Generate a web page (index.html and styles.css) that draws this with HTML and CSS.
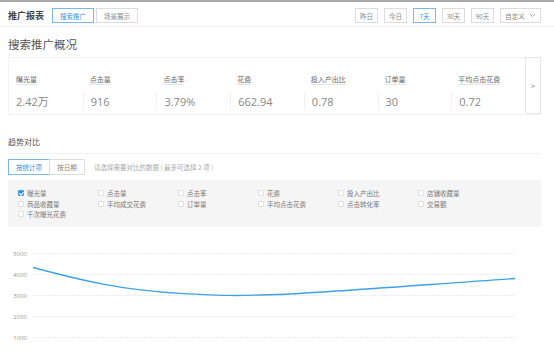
FILE: index.html
```html
<!DOCTYPE html>
<html lang="zh">
<head>
<meta charset="utf-8">
<link rel="stylesheet" href="styles.css">
</head>
<body>
<div class="topbar"></div>
<header class="header">
  <div class="title">推广报表</div>
  <div class="tabs">
    <span class="btn active">搜索推广</span>
    <span class="btn">场景展示</span>
  </div>
  <div class="ranges">
    <span class="btn sm">昨日</span>
    <span class="btn sm">今日</span>
    <span class="btn sm active">7天</span>
    <span class="btn sm">30天</span>
    <span class="btn sm">90天</span>
    <span class="btn custom">自定义 <svg width="7" height="5" viewBox="0 0 7 5"><path d="M1 1l2.5 2.5L6 1" fill="none" stroke="#999" stroke-width="0.8"/></svg></span>
  </div>
</header>
<main class="content">
  <h2 class="section-title">搜索推广概况</h2>
  <div class="card">
    <div class="metrics">
      <div class="metric"><div class="label">曝光量</div><div class="value">2.42万</div></div>
      <div class="metric"><div class="label">点击量</div><div class="value sep">916</div></div>
      <div class="metric"><div class="label">点击率</div><div class="value sep">3.79%</div></div>
      <div class="metric"><div class="label">花费</div><div class="value sep">662.94</div></div>
      <div class="metric"><div class="label">投入产出比</div><div class="value sep">0.78</div></div>
      <div class="metric"><div class="label">订单量</div><div class="value sep">30</div></div>
      <div class="metric"><div class="label">平均点击花费</div><div class="value sep">0.72</div></div>
    </div>
    <div class="next">&gt;</div>
  </div>

  <h3 class="sub-title">趋势对比</h3>
  <div class="toolbar">
    <div class="seg">
      <span class="btn active">按统计项</span>
      <span class="btn">按日期</span>
    </div>
    <span class="hint">请选择需要对比的数据 ( 最多可选择 2 项 )</span>
  </div>
  <div class="panel">
    <label class="cb checked"><i></i>曝光量</label>
    <label class="cb"><i></i>点击量</label>
    <label class="cb"><i></i>点击率</label>
    <label class="cb"><i></i>花费</label>
    <label class="cb"><i></i>投入产出比</label>
    <label class="cb"><i></i>店铺收藏量</label>
    <label class="cb"><i></i>商品收藏量</label>
    <label class="cb"><i></i>平均成交花费</label>
    <label class="cb"><i></i>订单量</label>
    <label class="cb"><i></i>平均点击花费</label>
    <label class="cb"><i></i>点击转化率</label>
    <label class="cb"><i></i>交易额</label>
    <label class="cb"><i></i>千次曝光花费</label>
  </div>
</main>
<svg class="chart" width="554" height="127" viewBox="0 227 554 127">
  <g stroke="#ececec" stroke-width="1" stroke-dasharray="2 1">
    <line x1="33" y1="253.5" x2="515" y2="253.5"/>
    <line x1="33" y1="274.5" x2="515" y2="274.5"/>
    <line x1="33" y1="295.5" x2="515" y2="295.5"/>
    <line x1="33" y1="316.5" x2="515" y2="316.5"/>
    <line x1="33" y1="337.5" x2="515" y2="337.5"/>
  </g>
  <g class="axis" text-anchor="end">
    <text x="27" y="255.5">5000</text>
    <text x="27" y="276.5">4000</text>
    <text x="27" y="297.5">3000</text>
    <text x="27" y="318.5">2000</text>
    <text x="27" y="339.5">1000</text>
  </g>
  <path d="M33 267.5 C 80 280, 120 290, 180 293.3 S 240 295.5, 277 294.5 S 440 283.5, 515 278.5" fill="none" stroke="#3ba2e8" stroke-width="1.3"/>
</svg>
</body>
</html>
```

FILE: styles.css
```css
* { box-sizing: border-box; margin: 0; padding: 0; }
html, body { width: 554px; height: 354px; overflow: hidden; background: #fff; }
body {
  font-family: "Noto Sans CJK SC", "Noto Sans", sans-serif;
  color: #333;
}
.topbar { height: 2px; background: #a9a9a9; }
.header {
  display: flex;
  align-items: center;
  height: 25px;
  padding: 3px 13px 0 8px;
  border-bottom: 1px solid #efefef;
}
.title { font-size: 9px; font-weight: bold; color: #444; margin-right: 8px; }
.tabs { display: flex; gap: 2px; }
.btn {
  display: inline-flex;
  align-items: center;
  justify-content: center;
  height: 15px;
  border: 1px solid #dcdcdc;
  background: #fff;
  font-size: 6.5px;
  color: #888;
  padding: 0 8px;
  white-space: nowrap;
}
.btn.active { border-color: #7ab8ea; color: #3a8fdc; }
.tabs .btn { width: 42px; padding: 0; }
.ranges { display: flex; gap: 6px; margin-left: auto; }
.btn.sm { width: 23px; padding: 0; }
.btn.custom { width: 41px; padding: 0; gap: 4px; }
.content { padding: 0 13px 0 8px; }
.section-title {
  font-size: 11.5px;
  font-weight: normal;
  color: #555;
  height: 31px;
  line-height: 34px;
  border-bottom: 1px solid #f0f0f0;
}
.card {
  display: flex;
  height: 57px;
  border: 1px solid #f2f2f2;
  border-top: none;
}
.metrics { flex: 1; display: grid; grid-template-columns: repeat(7, 1fr); }
.metric { padding-top: 5px; }
.label {
  display: inline-block;
  margin-left: 7px;
  font-size: 7px;
  color: #666;
  line-height: 10px;
  border-bottom: 1px solid #e6e6e6;
}
.value {
  margin-top: 6px;
  height: 17px;
  padding-left: 7px;
  font-size: 11px;
  color: #888;
  line-height: 17px;
  font-family: "Open Sans", "Noto Sans CJK SC", sans-serif;
}
.value.sep { border-left: 1px solid #f0f0f0; }
.next {
  width: 16px;
  margin-top: -1px;
  border: 1px solid #e6e6e6;
  display: flex;
  align-items: center;
  justify-content: center;
  font-size: 8px;
  color: #888;
  margin-right: -1px;
}
.sub-title {
  margin-top: 19px;
  font-size: 8px;
  font-weight: normal;
  color: #555;
  height: 20px;
  line-height: 16px;
  border-bottom: 1px solid #f0f0f0;
}
.toolbar { display: flex; align-items: center; margin-top: 5px; height: 16px; }
.seg { display: flex; }
.seg .btn { height: 16px; padding: 0; }
.seg .btn:first-child { width: 42px; }
.seg .btn:last-child { width: 36px; margin-left: -1px; }
.hint { font-size: 6.5px; color: #aaa; margin-left: 9px; }
.panel {
  margin-top: 5px;
  background: #f5f5f5;
  height: 47px;
  padding: 8px 0 0 10px;
  display: grid;
  grid-template-columns: repeat(6, 80px);
  grid-auto-rows: 10.5px;
}
.cb {
  display: flex;
  align-items: center;
  font-size: 6.5px;
  color: #777;
  white-space: nowrap;
}
.cb i {
  width: 6px;
  height: 6px;
  border: 1px solid #e0e0e0;
  background: #fff;
  margin-right: 3px;
  border-radius: 1px;
  position: relative;
}
.cb.checked i { background: #3c96e0; border-color: #3c96e0; }
.cb.checked i::after {
  content: "";
  position: absolute;
  left: 1px;
  top: 0;
  width: 1.5px;
  height: 3px;
  border: solid #fff;
  border-width: 0 1px 1px 0;
  transform: rotate(45deg);
}
.chart { display: block; }
.axis text { font-size: 6px; fill: #999; font-family: "Open Sans", sans-serif; }
```
